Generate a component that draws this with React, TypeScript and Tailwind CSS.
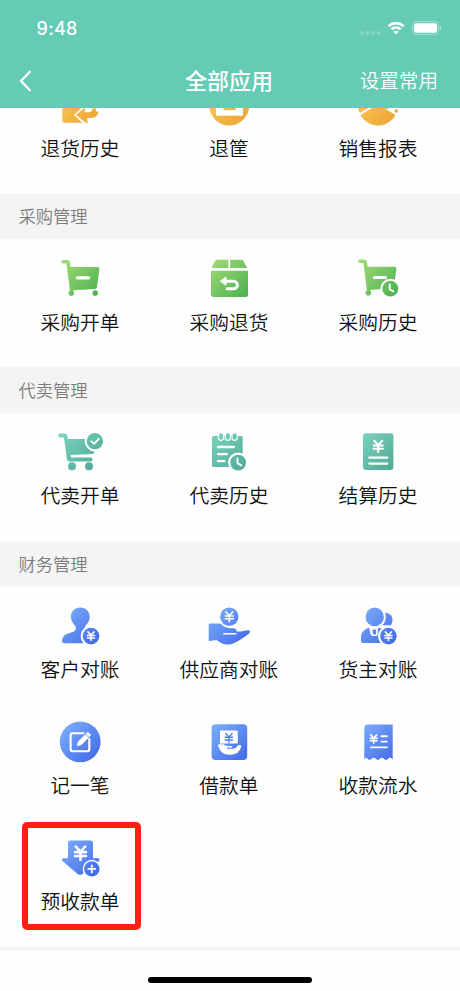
import type { ReactNode } from "react";

type AppItem = { name: string; icon: ReactNode; highlighted?: boolean };

function Gradients() {
  return (
    <svg width="0" height="0" className="absolute">
      <defs>
        <linearGradient id="orange" gradientUnits="userSpaceOnUse" x1="6" y1="6" x2="42" y2="42">
          <stop offset="0" stopColor="#f6cf55" />
          <stop offset="1" stopColor="#efa234" />
        </linearGradient>
        <linearGradient id="green" gradientUnits="userSpaceOnUse" x1="6" y1="6" x2="42" y2="42">
          <stop offset="0" stopColor="#a2dc74" />
          <stop offset="1" stopColor="#4db152" />
        </linearGradient>
        <linearGradient id="teal" gradientUnits="userSpaceOnUse" x1="6" y1="6" x2="42" y2="42">
          <stop offset="0" stopColor="#79d3bf" />
          <stop offset="1" stopColor="#4fa893" />
        </linearGradient>
        <linearGradient id="blue" gradientUnits="userSpaceOnUse" x1="6" y1="6" x2="42" y2="42">
          <stop offset="0" stopColor="#7eaffa" />
          <stop offset="1" stopColor="#4069e8" />
        </linearGradient>
      </defs>
    </svg>
  );
}

function Icon({ children }: { children: ReactNode }) {
  return (
    <svg width="48" height="48" viewBox="0 0 48 48" fill="none" strokeLinecap="round" strokeLinejoin="round">
      {children}
    </svg>
  );
}

// Yen sign centred on (x, y)
function Yen({ x, y, s = 1, w = 1.7, color = "#fff" }: { x: number; y: number; s?: number; w?: number; color?: string }) {
  return (
    <path
      transform={`translate(${x} ${y}) scale(${s})`}
      d="M-3.6-5 0-1.2 3.6-5M0-1.2V5.2M-4.2-.8H4.2M-4.2 2.2H4.2"
      stroke={color}
      strokeWidth={w}
    />
  );
}

function Clock({ x, y, fill }: { x: number; y: number; fill: string }) {
  return (
    <>
      <circle cx={x} cy={y} r="10" fill="#fff" />
      <circle cx={x} cy={y} r="7.9" fill={fill} />
      <path d={`M${x - 0.6} ${y - 4.2}v4.7l3.7 2.3`} stroke="#fff" strokeWidth="1.9" />
    </>
  );
}

function YenBadge({ x, y }: { x: number; y: number }) {
  return (
    <>
      <circle cx={x} cy={y} r="10.4" fill="#fff" />
      <circle cx={x} cy={y} r="8.3" fill="url(#blue)" />
      <Yen x={x} y={y} s={0.85} w={1.8} />
    </>
  );
}

const CART_BODY =
  "M6.9 6h4.5q2.1 0 2.5 2.2l.8 4.9H41.6q2 0 1.8 2L41 33q-.3 1.9-2 2L17.3 36.2l-.6 1.8-2.6-.4L10.4 9.5H6.9a1.7 1.7 0 0 1 0-3.5Z";

const sales: AppItem[] = [
  {
    name: "退货历史",
    icon: (
      <Icon>
        <path d="M8.5 8H37v33.7H8.5q-2.2 0-2.2-2.2V8Z" fill="url(#orange)" />
        <path d="M18 34 32 21H46V46H31Z" fill="#fff" />
        <path d="M20 34 28.6 26.8q.5-.2.5.4l-.6 4.1h4.2q3.3 0 4.1-4h3v3q2.8 0 2.8.9-1.8 5.6-7.5 5.9h-4l.4 4.6q0 1-.9.5Z" fill="url(#orange)" />
      </Icon>
    ),
  },
  {
    name: "退筐",
    icon: (
      <Icon>
        <circle cx="24.2" cy="24.4" r="20" fill="url(#orange)" />
        <path d="M11 26.5H38v8.2H11Z" fill="#fff" />
        <path d="M18.5 26h12v3.2h-12Z" fill="url(#orange)" />
      </Icon>
    ),
  },
  {
    name: "销售报表",
    icon: (
      <Icon>
        <circle cx="24" cy="24.4" r="20" fill="url(#orange)" />
        <path d="M4 35.5 24 23.5 44 35.5V26L34 22H24L4 32Z" fill="#fff" />
        <path d="M4.4 26H15L6 31.9q-1.3-2-1.6-5.9Z" fill="url(#orange)" />
        <path d="M24 28q-4-2.5-4.8.2L8 36.4l16 4 17-4Z" fill="url(#orange)" />
        <path d="M31.5 26.2 37 30" stroke="#fff" strokeWidth="2" />
        <path d="M27 26h7v2q-3 .3-7-2Z" fill="url(#orange)" />
        <circle cx="42.2" cy="30" r="1.8" fill="url(#orange)" />
      </Icon>
    ),
  },
];

const purchase: AppItem[] = [
  {
    name: "采购开单",
    icon: (
      <Icon>
        <path d={CART_BODY} fill="url(#green)" />
        <circle cx="15.3" cy="39.1" r="2.8" fill="url(#green)" />
        <circle cx="39.2" cy="39.1" r="2.8" fill="url(#green)" />
        <path d="M21.3 23.8H32.6" stroke="#fff" strokeWidth="3.2" />
      </Icon>
    ),
  },
  {
    name: "采购退货",
    icon: (
      <Icon>
        <path d="M12.2 5.7H23.3V14H6.5L10 7q.7-1.3 2.2-1.3Z" fill="url(#green)" />
        <path d="M25.1 5.7H36.3q1.5 0 2.2 1.3L42.2 14H25.1Z" fill="url(#green)" />
        <path d="M6 16.8H43V40.8q0 2.2-2.2 2.2H8.2Q6 43 6 40.8Z" fill="url(#green)" />
        <path d="M20.5 27.2h8.1a3.8 3.8 0 0 1 0 7.6h-6.4" stroke="#fff" strokeWidth="3" />
        <path d="M15.5 27 21 23v8Z" fill="#fff" stroke="#fff" strokeWidth=".8" />
      </Icon>
    ),
  },
  {
    name: "采购历史",
    icon: (
      <Icon>
        <path d={CART_BODY} transform="translate(-1 -.4)" fill="url(#green)" />
        <circle cx="14.3" cy="38.8" r="2.8" fill="url(#green)" />
        <path d="M20.3 23.4H31.4" stroke="#fff" strokeWidth="3" />
        <Clock x={36.3} y={34.7} fill="url(#green)" />
      </Icon>
    ),
  },
];

const consign: AppItem[] = [
  {
    name: "代卖开单",
    icon: (
      <Icon>
        <path
          d="M4 5.6H8.6q2.2 0 2.6 2.1l.7 3.3H38l1.4 10-1 3.3q-.5 1.7-2.4 1.8L14.6 27l.4 2.6H34.7q1.9 0 1.9 1.9t-1.9 2H13.6q-2.2 0-2.6-2.2L7.9 9.4H4a1.9 1.9 0 0 1 0-3.8Z"
          fill="url(#teal)"
        />
        <circle cx="16" cy="38.3" r="4" fill="url(#teal)" />
        <circle cx="33" cy="38.3" r="4" fill="url(#teal)" />
        <circle cx="38.9" cy="13.3" r="10.2" fill="#fff" />
        <circle cx="38.9" cy="13.3" r="8.2" fill="url(#teal)" />
        <path d="m35.4 13.4 2.6 2.5 4.8-5" stroke="#fff" strokeWidth="2" />
      </Icon>
    ),
  },
  {
    name: "代卖历史",
    icon: (
      <Icon>
        <path d="M8.5 8H36.2q1.5 0 1.5 1.5V39H8.5Q7 39 7 37.5v-28Q7 8 8.5 8Z" fill="url(#teal)" />
        {[16, 22.8, 29.6].map((x) => (
          <rect key={x} x={x - 2.6} y="4.8" width="5.2" height="7.6" rx="2.6" fill="url(#teal)" stroke="#fff" strokeWidth="1.1" />
        ))}
        <path d="M13 19H29M13 26.1h9M13 33.2h6.3" stroke="#fff" strokeWidth="2.3" />
        <Clock x={33.1} y={34.6} fill="url(#teal)" />
      </Icon>
    ),
  },
  {
    name: "结算历史",
    icon: (
      <Icon>
        <rect x="9" y="5.3" width="30.4" height="36.8" rx="3" fill="url(#teal)" />
        <Yen x={24.2} y={18.3} s={1.1} w={1.9} />
        <path d="M15.3 29.6H33.3M15.3 35.6H33.3" stroke="#fff" strokeWidth="2.2" />
      </Icon>
    ),
  },
];

const finance: AppItem[] = [
  {
    name: "客户对账",
    icon: (
      <Icon>
        <path
          d="M24.3 5.6c5.4 0 9.4 3.8 9.4 9.2 0 4-2 6.7-4 8.6-1.5 1.5-1.2 3.3.5 4.4L36 30v11.3H8.2Q6 41.3 6 39.1q0-5.3 5.1-7.1l5.2-1.9c3.3-1.2 4.6-3.9 2.6-6.7-2-2.2-4-4.6-4-8.6 0-5.4 4-9.2 9.4-9.2Z"
          fill="url(#blue)"
        />
        <YenBadge x={35} y={34.1} />
      </Icon>
    ),
  },
  {
    name: "供应商对账",
    icon: (
      <Icon>
        <path
          d="M3.7 22.4q0-.8.8-.8h8.2c3 0 5.4.2 7.4 2.1 2.2 2 4.3 2.4 8 2.6 2.5.2 3.9 1.1 3.6 3.3h4l6.8-1.3c2.7-.3 3.3 1.7 1.6 3.1-3.6 3-8.5 6.3-13.4 8.8-5.7 3-10.5 3.3-15.5.3L11.5 38l-7.1 1.1q-.7 0-.7-.8Z"
          fill="url(#blue)"
        />
        <path d="M18.8 31.8H31" stroke="#fff" strokeWidth="1.4" />
        <circle cx="24.3" cy="14.7" r="10.9" fill="#fff" />
        <circle cx="24.3" cy="14.7" r="9.2" fill="url(#blue)" />
        <Yen x={24.3} y={14.7} s={0.95} w={1.7} />
      </Icon>
    ),
  },
  {
    name: "货主对账",
    icon: (
      <Icon>
        <path d="M29.5 10.8c5.3-.8 9 2.4 9 7 0 2.2-.6 3.8-1.8 5.5H28Z" fill="url(#blue)" />
        <path d="M13.6 26h17v15H9Q7 41 7 39v-3.6q0-4.2 3-6.8Z" fill="url(#blue)" />
        <path d="M15.2 25.5h8.6v6q0 2.6-2.4 2.6h-2.2q-2.3 0-2.8-2.4Z" fill="#fff" />
        <path d="M18.3 27.5h4l-.3 5h-3Z" fill="url(#blue)" />
        <ellipse cx="20.8" cy="15" rx="11" ry="11.1" fill="#fff" />
        <ellipse cx="20.7" cy="14.9" rx="9.1" ry="9.3" fill="url(#blue)" />
        <YenBadge x={34.4} y={34.1} />
      </Icon>
    ),
  },
  {
    name: "记一笔",
    icon: (
      <Icon>
        <circle cx="24.2" cy="23.8" r="20.4" fill="url(#blue)" />
        <path d="M27.5 15.2H16.6Q14.6 15.2 14.6 17.2V31q0 2.2 2 2.2H31.3q2 0 2-2.2V21" stroke="#fff" strokeWidth="2.1" />
        <path d="m21.3 27.5 1.2-4.1 6.8-6.7 3 3-6.8 6.7Z" fill="#fff" stroke="#fff" strokeWidth=".8" />
        <path d="m30.3 15.6 1.6-1.4 2.8 2.8-1.5 1.6Z" fill="#fff" stroke="#fff" strokeWidth=".8" />
      </Icon>
    ),
  },
  {
    name: "借款单",
    icon: (
      <Icon>
        <rect x="6.6" y="6.3" width="35.6" height="35.6" rx="4" fill="url(#blue)" />
        <rect x="15" y="12.4" width="17.8" height="13.2" rx="1.2" fill="#fff" />
        <Yen x={23.9} y={20} s={0.9} w={1.5} color="#5282ef" />
        <path
          d="M13.5 26.3h5.2q1.1 1.8 4 1.8h2.8q2 0 2 1.4H22v1.3h6.5q2.6-.2 3.6-2.5.7-1.5 3-1.4 1.5.2 1.2 1.5-2.1 8.3-11.3 8.3-9.6 0-11.9-9 0-1.4.4-1.4Z"
          fill="#fff"
        />
      </Icon>
    ),
  },
  {
    name: "收款流水",
    icon: (
      <Icon>
        <path d="M14 6.6H38.7V41.4q-2-2.8-4-1.2l-2.7 2-3.2-2.2q-1-.7-2.1 0l-2.8 2.2-3-2.2q-1.1-.7-2.2 0l-3.3 2.2-2.2-2q-1.4-1.2-2.9 1.2V10.3Q10.3 6.6 14 6.6Z" fill="url(#blue)" />
        <Yen x={19.7} y={21} s={0.82} w={2} />
        <path d="M27.5 18.2h5.4M27.5 23.6h5.4M17 29.4H32.9" stroke="#fff" strokeWidth="1.9" />
      </Icon>
    ),
  },
  {
    name: "预收款单",
    highlighted: true,
    icon: (
      <Icon>
        <path
          d="M14.3 6.6H34.7Q37 6.6 37 8.9V24.2h5q2.5.4.9 2.7L26.6 39.9q-2.5 1.7-5 0L6.5 26.9q-1.4-2.3.7-2.7H12V8.9q0-2.3 2.3-2.3Z"
          fill="url(#blue)"
        />
        <Yen x={24.5} y={19.2} s={1.3} w={2} />
        <circle cx="35.8" cy="34.9" r="9.2" fill="#fff" />
        <circle cx="35.8" cy="34.9" r="7.7" fill="url(#blue)" />
        <path d="M35.8 31.4v7M32.3 34.9h7" stroke="#fff" strokeWidth="1.8" />
      </Icon>
    ),
  },
];

function AppGrid({ items }: { items: AppItem[] }) {
  return (
    <div className="grid shrink-0 grid-cols-3 pr-[7.5px] pb-3 pl-[5.5px]">
      {items.map((item) => (
        <div key={item.name} className="relative flex h-[116px] flex-col items-center gap-[5.5px] pt-[15px]">
          {item.icon}
          <span className="text-[19.75px] leading-7 font-[350] whitespace-nowrap text-[#111]">{item.name}</span>
          {item.highlighted && (
            <div className="absolute top-[3px] left-4 h-[108px] w-[119px] rounded-[5px] border-[6px] border-[#ff2012]" />
          )}
        </div>
      ))}
    </div>
  );
}

function Section({ title, items }: { title: string; items: AppItem[] }) {
  return (
    <section>
      <h2 className="flex h-[45.7px] items-center bg-[#f4f4f4] pl-[18.5px] text-[17.3px] font-[350] text-[#7c7c7c]">{title}</h2>
      <AppGrid items={items} />
    </section>
  );
}

function StatusBar() {
  return (
    <div className="flex h-[56px] items-center justify-between pr-[18px] pl-[36.5px]">
      <span className="font-['Inter'] text-[18px] font-medium tracking-[0.3px]">9:48</span>
      <svg width="84" height="20" viewBox="358 18 84 20" fill="none">
        {[361.7, 367.5, 373.1, 378.8].map((x) => (
          <circle key={x} cx={x} cy="32.9" r="2" fill="#fff" fillOpacity=".25" />
        ))}
        <path d="M388.4 26.2a11.2 11.2 0 0 1 15.4 0M391.4 29.3a7 7 0 0 1 9.4 0" stroke="#fff" strokeWidth="2.5" />
        <path d="m396.1 34.5-2.7-2.8a4 4 0 0 1 5.4 0Z" fill="#fff" />
        <rect x="412.4" y="21.6" width="26.2" height="12.8" rx="3.8" stroke="#fff" strokeOpacity=".4" />
        <rect x="414" y="23.2" width="23" height="9.6" rx="2.3" fill="#fff" />
        <path d="M439.8 26v4.4q1.4-.6 1.4-2.2t-1.4-2.2Z" fill="#fff" fillOpacity=".5" />
      </svg>
    </div>
  );
}

export default function App() {
  return (
    <div className="flex h-[991px] w-[460px] flex-col overflow-hidden bg-[#fefefe] font-['Noto_Sans_CJK_SC',sans-serif]">
      <Gradients />
      <header className="h-[107.5px] shrink-0 bg-[#65cbb5] text-white">
        <StatusBar />
        <div className="grid h-[49px] grid-cols-[1fr_auto_1fr] items-center pr-[22px] pl-[19px]">
          <svg width="14" height="22" viewBox="0 0 14 22" fill="none">
            <path d="M10.8 1.8 2 11l8.8 9.2" stroke="#fff" strokeWidth="2.3" strokeLinecap="round" strokeLinejoin="round" />
          </svg>
          <h1 className="pb-1 pl-px text-[22px] leading-none font-medium">全部应用</h1>
          <span className="justify-self-end pb-px text-[19.6px] leading-none font-[350]">设置常用</span>
        </div>
      </header>

      {/* first section, scrolled half way under the header */}
      <div className="flex h-[86px] shrink-0 flex-col justify-end overflow-hidden">
        <AppGrid items={sales} />
      </div>
      <Section title="采购管理" items={purchase} />
      <Section title="代卖管理" items={consign} />
      <Section title="财务管理" items={finance} />

      <footer className="flex flex-1 flex-col items-center justify-end border-t-[4px] border-[#f4f4f4] pb-2">
        <div className="h-[6px] w-[164px] rounded-full bg-black" />
      </footer>
    </div>
  );
}
